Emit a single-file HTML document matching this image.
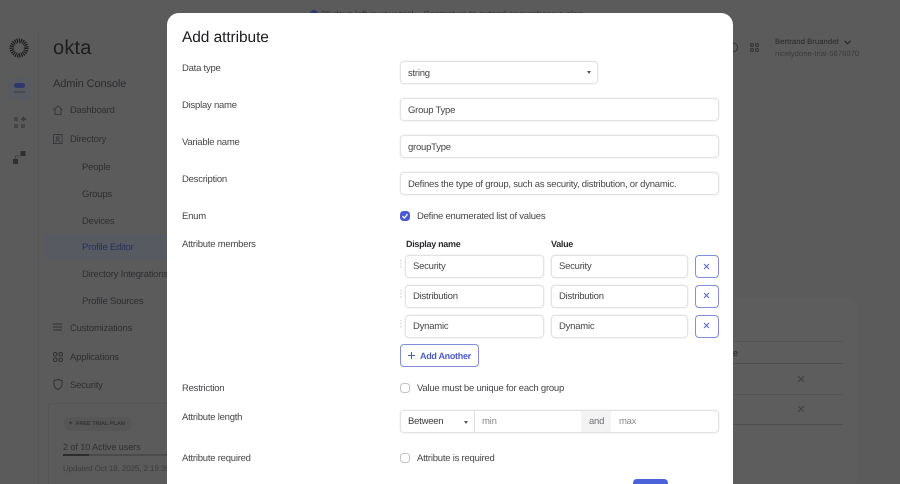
<!DOCTYPE html>
<html><head><meta charset="utf-8"><style>
html,body{margin:0;padding:0;width:900px;height:484px;overflow:hidden;background:#5b5b5c}
#r{position:absolute;left:0;top:0;width:900px;height:484px;overflow:hidden;background:#5b5b5c;font-family:"Liberation Sans",sans-serif;color:#3f3f42;font-size:9.5px;text-rendering:geometricPrecision}
.t{position:absolute;white-space:nowrap;line-height:14px}
.l{font-size:9.5px;letter-spacing:-.23px;color:#46464a}
.n{font-size:9.5px;letter-spacing:-.23px}
.bg{color:#2f2f31;font-size:9.5px;letter-spacing:-.2px}
.b{font-size:9px;font-weight:bold;letter-spacing:-.3px}
.i{position:absolute;box-sizing:border-box;border:1px solid #e3e3e6;border-radius:4px;background:#fff;box-shadow:0 0 0 .5px #eee;font-size:9.5px;letter-spacing:-.23px;color:#46464a;line-height:23px;padding-left:7px;height:23px;white-space:nowrap}
.m{line-height:21px}
.x{position:absolute;box-sizing:border-box;left:695px;width:24px;height:23px;border:1px solid #7f8fd8;border-radius:4px;background:#fff}
.c{position:absolute;left:400px;width:10px;height:10px;box-sizing:border-box;border:1px solid #c4c4c8;border-radius:3.5px;background:#fff}
.line{position:absolute;background:#555556}
svg{position:absolute;overflow:visible}
</style></head><body><div id="r">
<!-- background -->
<div class="line" style="left:38px;top:30px;width:1px;height:454px;background:#565657"></div>
<svg style="left:310px;top:10px" width="8" height="8" viewBox="0 0 8 8"><circle cx="4" cy="4" r="4" fill="#2e3870"/></svg>
<div class="t bg" style="left:321px;top:7px;color:#333;font-size:9px;letter-spacing:0">30 days left in your trial.&nbsp;&nbsp;&nbsp;Contact us to extend or purchase a plan.</div>
<svg style="left:9px;top:38px" width="20" height="20" viewBox="0 0 20 20"><circle cx="10" cy="10" r="7.3" fill="none" stroke="#1c1c1e" stroke-width="4.4" stroke-dasharray="1.1 .9"/></svg>
<div class="t" style="left:53px;top:34px;font-size:20px;line-height:28px;color:#1d1d1f;letter-spacing:.2px">okta</div>
<div class="line" style="left:8px;top:78px;width:23px;height:22px;background:#585a62;border-radius:3px"></div>
<div class="line" style="left:14px;top:83px;width:11px;height:5px;background:#2e3870;border-radius:3px"></div>
<div class="line" style="left:14px;top:91px;width:11px;height:2px;background:#4a4a52"></div>
<svg style="left:13px;top:116px" width="13" height="13" viewBox="0 0 13 13" fill="#454547"><rect x="1" y="1" width="4" height="4"/><path d="M8 3h5M10.5 .5v5" stroke="#3a3a3c" stroke-width="1.5"/><rect x="1" y="8" width="4" height="4"/><rect x="8" y="8" width="4" height="4"/></svg>
<svg style="left:13px;top:151px" width="13" height="13" viewBox="0 0 13 13" fill="#2f2f31"><rect x="7.5" y="0" width="5" height="5"/><rect x="0" y="8" width="5" height="5"/><path d="M2.5 8V5h5" stroke="#444" fill="none"/></svg>
<div class="t" style="left:53px;top:77px;font-size:11px;color:#2c2c2e;letter-spacing:-.1px">Admin Console</div>
<div class="line" style="left:44px;top:234px;width:123px;height:26px;background:#585a62"></div>
<svg style="left:53px;top:105px" width="10" height="10" viewBox="0 0 10 10" fill="none" stroke="#39393b"><path d="M.5 5 5 .8 9.5 5M2 4v5.500h6V4"/></svg>
<svg style="left:53px;top:134px" width="10" height="10" viewBox="0 0 10 10" fill="none" stroke="#39393b"><rect x=".5" y=".5" width="8.5" height="9"/><circle cx="4.7" cy="4" r="1.3"/><path d="M2.5 8c1-2 3.5-2 4.500 0"/></svg>
<div class="t bg" style="left:70px;top:104px">Dashboard</div>
<div class="t bg" style="left:70px;top:133px">Directory</div>
<div class="t bg" style="left:82px;top:161px">People</div>
<div class="t bg" style="left:82px;top:188px">Groups</div>
<div class="t bg" style="left:82px;top:215px">Devices</div>
<div class="t bg" style="left:82px;top:241px;color:#27305f">Profile Editor</div>
<div class="t bg" style="left:82px;top:268px">Directory Integrations</div>
<div class="t bg" style="left:82px;top:295px">Profile Sources</div>
<svg style="left:53px;top:322px" width="10" height="11" viewBox="0 0 10 11" fill="none" stroke="#303032"><path d="M0 2h9M0 5h9M0 8h9"/></svg>
<div class="t bg" style="left:70px;top:322px">Customizations</div>
<svg style="left:53px;top:352px" width="10" height="10" viewBox="0 0 10 10" fill="none" stroke="#303032"><circle cx="2.3" cy="2.3" r="1.8"/><circle cx="7.7" cy="2.3" r="1.8"/><circle cx="2.3" cy="7.700" r="1.8"/><circle cx="7.7" cy="7.7" r="1.8"/></svg>
<div class="t bg" style="left:70px;top:351px">Applications</div>
<svg style="left:53px;top:379px" width="10" height="11" viewBox="0 0 10 11" fill="none" stroke="#303032"><path d="M1 1.5 5 .5l4 1V6c0 2-2 3.500-4 4.500C3 9.500 1 8 1 6Z"/></svg>
<div class="t bg" style="left:70px;top:379px">Security</div>
<div style="position:absolute;left:48px;top:403px;width:130px;height:90px;box-sizing:border-box;border:1px solid #555556;border-radius:3px"></div>
<div class="line" style="left:64px;top:417px;width:68px;height:14px;background:#565657;border-radius:7px"></div>
<div class="t" style="left:76px;top:417px;font-size:5.5px;font-weight:bold;color:#333;letter-spacing:0">FREE TRIAL PLAN</div>
<div class="t" style="left:68px;top:417px;font-size:6px;color:#333">✦</div>
<div class="t bg" style="left:63px;top:440px;font-size:9px;letter-spacing:-.05px">2 of 10 Active users</div>
<div class="line" style="left:63px;top:454px;width:104px;height:2px;background:#4b4b4c"></div>
<div class="line" style="left:63px;top:454px;width:26px;height:2px;background:#2c2c2e"></div>
<div class="t" style="left:63px;top:462px;font-size:8px;color:#3c3c3e;letter-spacing:-.1px">Updated Oct 18, 2025, 2:19:35</div>
<svg style="left:729px;top:42px" width="10" height="11" viewBox="0 0 10 11" fill="none" stroke="#333"><circle cx="4" cy="5.5" r="4.5"/></svg>
<svg style="left:750px;top:43px" width="9" height="9" viewBox="0 0 9 9" fill="none" stroke="#333"><circle cx="2" cy="2" r="1.5"/><circle cx="7" cy="2" r="1.5"/><circle cx="2" cy="7" r="1.5"/><circle cx="7" cy="7" r="1.5"/></svg>
<div class="t" style="left:775px;top:35px;font-size:7.8px;color:#2a2a2c;letter-spacing:0">Bertrand Bruandet</div>
<svg style="left:844px;top:40px" width="7" height="5" viewBox="0 0 7 5" fill="none" stroke="#2a2a2c" stroke-width="1.2"><path d="M.5 .8 3.5 3.8 6.5 .8"/></svg>
<div class="t" style="left:775px;top:47px;font-size:7.7px;color:#3b3b3d;letter-spacing:0">nicelydone-trial-5676070</div>
<div style="position:absolute;left:700px;top:298px;width:157px;height:190px;background:#5d5d5e;border-radius:8px"></div>
<div class="line" style="left:733px;top:341px;width:110px;height:1px"></div>
<div class="line" style="left:733px;top:363px;width:110px;height:1px;background:#505051"></div>
<div class="line" style="left:733px;top:394px;width:110px;height:1px"></div>
<div class="line" style="left:733px;top:424px;width:110px;height:1px;background:#505051"></div>
<div class="t" style="left:733px;top:346px;font-size:9px;color:#2c2c2e">e</div>
<svg style="left:798px;top:376px" width="6" height="6" viewBox="0 0 6 6" stroke="#404042"><path d="M0 0 6 6M6 0 0 6"/></svg>
<svg style="left:798px;top:406px" width="6" height="6" viewBox="0 0 6 6" stroke="#404042"><path d="M0 0 6 6M6 0 0 6"/></svg>
<!-- modal -->
<div style="position:absolute;left:167px;top:13px;width:566px;height:490px;background:#fff;border-radius:12px"></div>
<div class="t" style="left:182px;top:28px;font-size:15.5px;line-height:20px;color:#1d1d21;letter-spacing:-.08px">Add attribute</div>
<div class="t l" style="left:182px;top:62px">Data type</div>
<div class="t l" style="left:182px;top:99px">Display name</div>
<div class="t l" style="left:182px;top:136px">Variable name</div>
<div class="t l" style="left:182px;top:173px">Description</div>
<div class="t l" style="left:182px;top:210px">Enum</div>
<div class="t l" style="left:182px;top:238px">Attribute members</div>
<div class="t l" style="left:182px;top:382px">Restriction</div>
<div class="t l" style="left:182px;top:411px">Attribute length</div>
<div class="t l" style="left:182px;top:452px">Attribute required</div>
<div class="i" style="left:400px;top:61px;width:198px">string</div>
<div style="position:absolute;left:587px;top:71px;border:2px solid transparent;border-top:3px solid #555;border-bottom:0"></div>
<div class="i" style="left:400px;top:98px;width:319px">Group Type</div>
<div class="i" style="left:400px;top:135px;width:319px">groupType</div>
<div class="i" style="left:400px;top:172px;width:319px">Defines the type of group, such as security, distribution, or dynamic.</div>
<svg style="left:400px;top:211px" width="10" height="10" viewBox="0 0 10 10"><rect width="10" height="10" rx="3.5" fill="#4a5bd0"/><path d="M2.5 5.2 4.3 7 7.5 3.2" fill="none" stroke="#fff" stroke-width="1.3"/></svg>
<div class="t l" style="left:417px;top:210px">Define enumerated list of values</div>
<div class="t b" style="left:406px;top:237px;color:#2d2d31">Display name</div>
<div class="t b" style="left:551px;top:237px;color:#2d2d31">Value</div>
<div class="i m" style="left:405px;top:255px;width:139px">Security</div>
<div class="i m" style="left:551px;top:255px;width:137px">Security</div>
<div class="x" style="top:255px"></div>
<div class="i m" style="left:405px;top:285px;width:139px">Distribution</div>
<div class="i m" style="left:551px;top:285px;width:137px">Distribution</div>
<div class="x" style="top:285px"></div>
<div class="i m" style="left:405px;top:315px;width:139px">Dynamic</div>
<div class="i m" style="left:551px;top:315px;width:137px">Dynamic</div>
<div class="x" style="top:315px"></div>
<svg style="left:704px;top:264px" width="5" height="5" viewBox="0 0 5 5" stroke="#5a66b5"><path d="M0 0 5 5M5 0 0 5"/></svg>
<svg style="left:704px;top:293px" width="5" height="5" viewBox="0 0 5 5" stroke="#5a66b5"><path d="M0 0 5 5M5 0 0 5"/></svg>
<svg style="left:704px;top:323px" width="5" height="5" viewBox="0 0 5 5" stroke="#5a66b5"><path d="M0 0 5 5M5 0 0 5"/></svg>
<svg style="left:400px;top:260px" width="3" height="70" viewBox="0 0 3 70" fill="#ddd"><rect y="0" width="1.5" height="1.5"/><rect y="3" width="1.5" height="1.5"/><rect y="6" width="1.5" height="1.5"/><rect y="30" width="1.5" height="1.5"/><rect y="33" width="1.5" height="1.5"/><rect y="36" width="1.5" height="1.5"/><rect y="60" width="1.5" height="1.5"/><rect y="63" width="1.5" height="1.5"/><rect y="66" width="1.5" height="1.5"/></svg>
<div style="position:absolute;left:400px;top:344px;width:79px;height:23px;box-sizing:border-box;border:1px solid #7f8fd8;border-radius:4px;background:#fff"></div>
<svg style="left:408px;top:352px" width="7" height="7" viewBox="0 0 7 7" stroke="#4a5bc0" stroke-width="1"><path d="M3.5 0v7M0 3.5h7"/></svg>
<div class="t b" style="left:420px;top:349px;color:#4a5bc0">Add Another</div>
<div class="c" style="top:383px"></div>
<div class="t l" style="left:417px;top:382px">Value must be unique for each group</div>
<div class="i" style="left:400px;top:410px;width:319px"></div>
<div class="t n" style="left:408px;top:415px;color:#3b3b3f">Between</div>
<div style="position:absolute;left:464px;top:421px;border:2px solid transparent;border-top:3px solid #555;border-bottom:0"></div>
<div class="line" style="left:474px;top:410px;width:1px;height:23px;background:#e0e0e3"></div>
<div class="t n" style="left:482px;top:415px;color:#8b8b90">min</div>
<div class="line" style="left:581px;top:411px;width:30px;height:21px;background:#f3f3f4"></div>
<div class="t n" style="left:589px;top:415px;color:#6e6e73">and</div>
<div class="t n" style="left:619px;top:415px;color:#8b8b90">max</div>
<div class="c" style="top:453px"></div>
<div class="t l" style="left:417px;top:452px">Attribute is required</div>
<div style="position:absolute;left:633px;top:479px;width:35px;height:20px;background:#4a63d8;border-radius:4px"></div>
</div></body></html>
